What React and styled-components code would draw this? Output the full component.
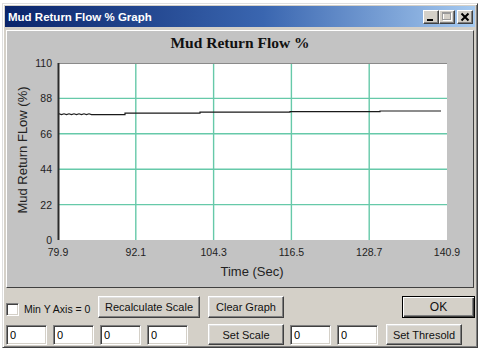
import React from "react";
import styled, { createGlobalStyle } from "styled-components";

const GlobalStyle = createGlobalStyle`
  body {
    margin: 0;
    background: #ffffff;
    font-family: "Liberation Sans", Arial, sans-serif;
  }
`;

const yTicks = ["110", "88", "66", "44", "22", "0"];
const xTicks = ["79.9", "92.1", "104.3", "116.5", "128.7", "140.9"];

const PLOT = { left: 58, top: 63, right: 447, bottom: 240 };
const yStep = (PLOT.bottom - PLOT.top) / 5;
const xStep = (PLOT.right - PLOT.left) / 5;

// jittery start of the trace, then small steps upward
const wave = [];
for (let x = 59, i = 0; x <= 92; x += 2.5, i++) {
  wave.push(`${x} ${i % 2 ? 114.6 : 113.8}`);
}
const tracePath =
  "M" + wave.join(" L") +
  " L125 114.6 L125 113.2 L200 113.2 L200 112.2 L290 112.2 L290 111.6 L380 111.6 L380 111 L441 111";

export default function App() {
  return (
    <>
      <GlobalStyle />
      <Window>
        <TitleBar>
          <Caption>Mud Return Flow % Graph</Caption>
          <TitleButtons>
            <TitleButton>
              <svg width="14" height="12" viewBox="0 0 14 12">
                <rect x="3" y="8" width="6" height="2" fill="#000" />
              </svg>
            </TitleButton>
            <TitleButton>
              <svg width="14" height="12" viewBox="0 0 14 12">
                <rect x="3.5" y="2.5" width="8" height="7" fill="none" stroke="#ffffff" />
                <rect x="2.5" y="1.5" width="8" height="7" fill="none" stroke="#9a9a9a" />
                <rect x="2" y="1" width="9" height="2" fill="#9a9a9a" />
              </svg>
            </TitleButton>
            <TitleButton $gap={2}>
              <svg width="14" height="12" viewBox="0 0 14 12">
                <path d="M3.5 2.5 L10.5 9.5 M10.5 2.5 L3.5 9.5" stroke="#000" strokeWidth="2" />
              </svg>
            </TitleButton>
          </TitleButtons>
        </TitleBar>

        <GraphPanel>
          <svg width="466" height="256" viewBox="7 31 466 256">
            <text x="240" y="48" textAnchor="middle" fontFamily="'Liberation Serif', 'Times New Roman', serif" fontWeight="bold" fontSize="15.5" fill="#111">
              Mud Return Flow %
            </text>

            <rect x={PLOT.left} y={PLOT.top} width={PLOT.right - PLOT.left} height={PLOT.bottom - PLOT.top} fill="#ffffff" />

            {[1, 2, 3, 4].map((i) => (
              <line key={"h" + i} x1={PLOT.left} x2={PLOT.right} y1={PLOT.top + i * yStep} y2={PLOT.top + i * yStep} stroke="#66c9a9" strokeWidth="1.4" />
            ))}
            {[1, 2, 3, 4].map((i) => (
              <line key={"v" + i} x1={PLOT.left + i * xStep} x2={PLOT.left + i * xStep} y1={PLOT.top} y2={PLOT.bottom} stroke="#66c9a9" strokeWidth="1.4" />
            ))}

            <line x1={PLOT.left} x2={PLOT.right} y1={PLOT.top + 0.5} y2={PLOT.top + 0.5} stroke="#8a8a8a" />
            <line x1={PLOT.left + 0.5} x2={PLOT.left + 0.5} y1={PLOT.top} y2={PLOT.bottom} stroke="#2a2a2a" strokeWidth="2" />

            <path d={tracePath} fill="none" stroke="#1a1a1a" strokeWidth="1.2" />

            {yTicks.map((t, i) => (
              <text key={t} x="52" y={PLOT.top + i * yStep + 4} textAnchor="end" fontSize="10.5" fill="#222">
                {t}
              </text>
            ))}
            {xTicks.map((t, i) => (
              <text key={t} x={PLOT.left + i * xStep} y="256" textAnchor="middle" fontSize="10.5" fill="#222">
                {t}
              </text>
            ))}

            <text x="252" y="276" textAnchor="middle" fontSize="13" fill="#222">
              Time (Sec)
            </text>
            <text x="27" y="150" textAnchor="middle" fontSize="13" fill="#222" transform="rotate(-90 27 150)">
              Mud Return FLow (%)
            </text>
          </svg>
        </GraphPanel>

        <Controls>
          <Row $height={22}>
            <CheckBox $ml={1} />
            <CheckLabel>Min Y Axis = 0</CheckLabel>
            <Button $w={102}>Recalculate Scale</Button>
            <Button $w={76} $ml={8}>Clear Graph</Button>
            <DefaultButton $w={73}>OK</DefaultButton>
          </Row>
          <Row $height={21}>
            <Field $ml={1} defaultValue="0" />
            <Field $ml={6} defaultValue="0" />
            <Field $ml={6} defaultValue="0" />
            <Field $ml={6} defaultValue="0" />
            <Button $w={76} $ml={20}>Set Scale</Button>
            <Field $ml={6} defaultValue="0" />
            <Field $ml={6} defaultValue="0" />
            <Button $w={76} $ml={8}>Set Thresold</Button>
          </Row>
        </Controls>
      </Window>
    </>
  );
}

const Window = styled.div`
  box-sizing: border-box;
  width: 476px;
  height: 345px;
  margin: 3px 0 0 2px;
  padding: 2px;
  background: #d4d0c8;
  border: 1px solid;
  border-color: #dfdfdf #404040 #404040 #dfdfdf;
  box-shadow: inset 1px 1px #ffffff, inset -1px -1px #808080;
  display: flex;
  flex-direction: column;
`;

const TitleBar = styled.div`
  height: 21px;
  flex: none;
  display: flex;
  align-items: center;
  justify-content: space-between;
  padding: 0 2px;
  background: linear-gradient(90deg, #0a246a 0%, #3a66b0 55%, #a6caf0 100%);
`;

const Caption = styled.span`
  color: #ffffff;
  font-family: "Liberation Sans", Arial, sans-serif;
  font-weight: bold;
  font-size: 11.5px;
  padding-left: 1px;
`;

const TitleButtons = styled.div`
  display: flex;
  align-items: center;
`;

const TitleButton = styled.div`
  box-sizing: border-box;
  width: 16px;
  height: 14px;
  margin-left: ${(p) => p.$gap || 0}px;
  background: #d4d0c8;
  border: 1px solid;
  border-color: #ffffff #404040 #404040 #ffffff;
  box-shadow: inset -1px -1px #808080;
  display: flex;
  svg {
    display: block;
  }
`;

const GraphPanel = styled.div`
  box-sizing: border-box;
  height: 258px;
  flex: none;
  margin: 3px 1px 0;
  background: #c3c3c3;
  border: 1px solid;
  border-color: #ffffff #404040 #404040 #ffffff;
  font-family: "Liberation Sans", Arial, sans-serif;
  svg {
    display: block;
  }
`;

const Controls = styled.div`
  display: flex;
  flex-direction: column;
  gap: 6px;
  margin-top: 8px;
`;

const Row = styled.div`
  display: flex;
  align-items: center;
  height: ${(p) => p.$height}px;
`;

const sunken = `
  box-sizing: border-box;
  background: #ffffff;
  border: 1px solid;
  border-color: #808080 #ffffff #ffffff #808080;
  box-shadow: inset 1px 1px #404040, inset -1px -1px #d4d0c8;
`;

const CheckBox = styled.span`
  ${sunken}
  width: 13px;
  height: 13px;
  margin-left: ${(p) => p.$ml || 0}px;
  margin-top: 4px;
`;

const CheckLabel = styled.span`
  width: 74px;
  margin-left: 5px;
  margin-top: 4px;
  font-size: 10.5px;
  color: #111;
  white-space: nowrap;
`;

const Field = styled.input`
  ${sunken}
  width: 41px;
  height: 20px;
  margin: 0 0 0 ${(p) => p.$ml || 0}px;
  padding: 0 3px;
  font-family: "Liberation Sans", Arial, sans-serif;
  font-size: 11px;
  color: #000;
  outline: none;
`;

const Button = styled.button`
  box-sizing: border-box;
  width: ${(p) => p.$w}px;
  height: 100%;
  margin: 0 0 0 ${(p) => p.$ml || 0}px;
  padding: 0;
  background: #d4d0c8;
  border: 1px solid;
  border-color: #ffffff #404040 #404040 #ffffff;
  box-shadow: inset -1px -1px #808080, inset 1px 1px #dfdfdf;
  font-family: "Liberation Sans", Arial, sans-serif;
  font-size: 11px;
  color: #111;
`;

const DefaultButton = styled(Button)`
  margin-left: auto;
  border: 1px solid #000000;
  box-shadow: inset 1px 1px #ffffff, inset -1px -1px #404040, inset -2px -2px #808080;
  font-size: 12px;
`;
